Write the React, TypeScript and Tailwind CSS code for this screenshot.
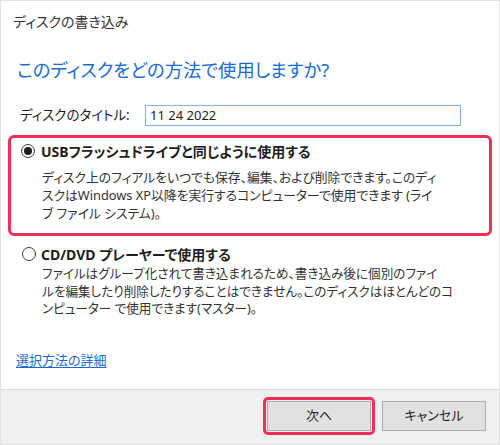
import { useState } from 'react';

const FONT = "font-['Noto_Sans','Noto_Sans_CJK_JP',sans-serif] [font-feature-settings:'palt']";

function Radio({ checked }: { checked: boolean }) {
  return (
    <span className="w-[14px] h-[14px] rounded-full border border-[#3a3a3a] bg-white flex items-center justify-center shrink-0">
      {checked && <span className="w-[8px] h-[8px] rounded-full bg-[#1e1e1e]" />}
    </span>
  );
}

export default function App() {
  const [mode, setMode] = useState<'usb' | 'cd'>('usb');
  const [title, setTitle] = useState('11 24 2022');

  return (
    <div className={`w-[500px] h-[445px] flex flex-col bg-white border border-[#e3e3e3] text-[#1e1e1e] ${FONT}`}>
      {/* Window title */}
      <div className="h-[40px] flex items-center pl-[12px] text-[14px] text-[#333]">ディスクの書き込み</div>

      {/* Heading */}
      <div className="h-[58px] flex items-center pl-[16px] text-[18.3px] text-[#1a6bcc]">
        このディスクをどの方法で使用しますか?
      </div>

      {/* Disc title */}
      <div className="h-[32px] flex items-center pl-[19px] text-[13.5px]">
        <span className="w-[125px] shrink-0">ディスクのタイトル:</span>
        <input
          value={title}
          onChange={(e) => setTitle(e.target.value)}
          className="w-[316px] h-[21px] border border-[#7ab4ea] px-[4px] text-[13px] outline-none"
        />
      </div>

      {/* USB option (highlighted) */}
      <div
        onClick={() => setMode('usb')}
        className="mt-[4px] mx-[7px] h-[101px] border-[3px] border-[#ee2f5a] rounded-[6px] pt-[2px] cursor-default"
      >
        <div className="h-[22px] flex items-center pl-[10px] gap-[6px] text-[14px] font-bold">
          <Radio checked={mode === 'usb'} />
          <span>USBフラッシュドライブと同じように使用する</span>
        </div>
        <div className="mt-[6px] pl-[31px] text-[12.8px] leading-[18px] text-[#333]">
          ディスク上のフィアルをいつでも保存、編集、および削除できます。このディ<br />
          スクはWindows XP以降を実行するコンピューターで使用できます (ライ<br />
          ブ ファイル システム)。
        </div>
      </div>

      {/* CD/DVD option */}
      <div onClick={() => setMode('cd')} className="mt-[7px] cursor-default">
        <div className="h-[22px] flex items-center pl-[21px] gap-[5px] text-[14px] font-bold">
          <Radio checked={mode === 'cd'} />
          <span>CD/DVD プレーヤーで使用する</span>
        </div>
        <div className="pl-[41px] text-[12.6px] leading-[17.5px] text-[#333]">
          ファイルはグループ化されて書き込まれるため、書き込み後に個別のファイ<br />
          ルを編集したり削除したりすることはできません。このディスクはほとんどのコ<br />
          ンピューター で使用できます(マスター)。
        </div>
      </div>

      {/* Help link */}
      <div className="mt-[33px] h-[20px] flex items-center pl-[15px] text-[13px]">
        <a href="#" className="text-[#1a6bcc] underline underline-offset-2">選択方法の詳細</a>
      </div>

      {/* Footer */}
      <div className="mt-auto h-[55px] bg-[#f0f0f0] border-t border-[#dcdcdc] flex items-start justify-end pr-[13px] pt-[7px]">
        <div className="border-[3px] border-[#ee2f5a] rounded-[5px] p-[1px]">
          <button className="w-[104px] h-[30px] bg-[#e1e1e1] border border-[#adadad] text-[13px] text-[#1e1e1e]">次へ</button>
        </div>
        <button className="ml-[7px] mt-[4px] w-[104px] h-[30px] bg-[#e1e1e1] border border-[#adadad] text-[13px] text-[#1e1e1e]">キャンセル</button>
      </div>
    </div>
  );
}
